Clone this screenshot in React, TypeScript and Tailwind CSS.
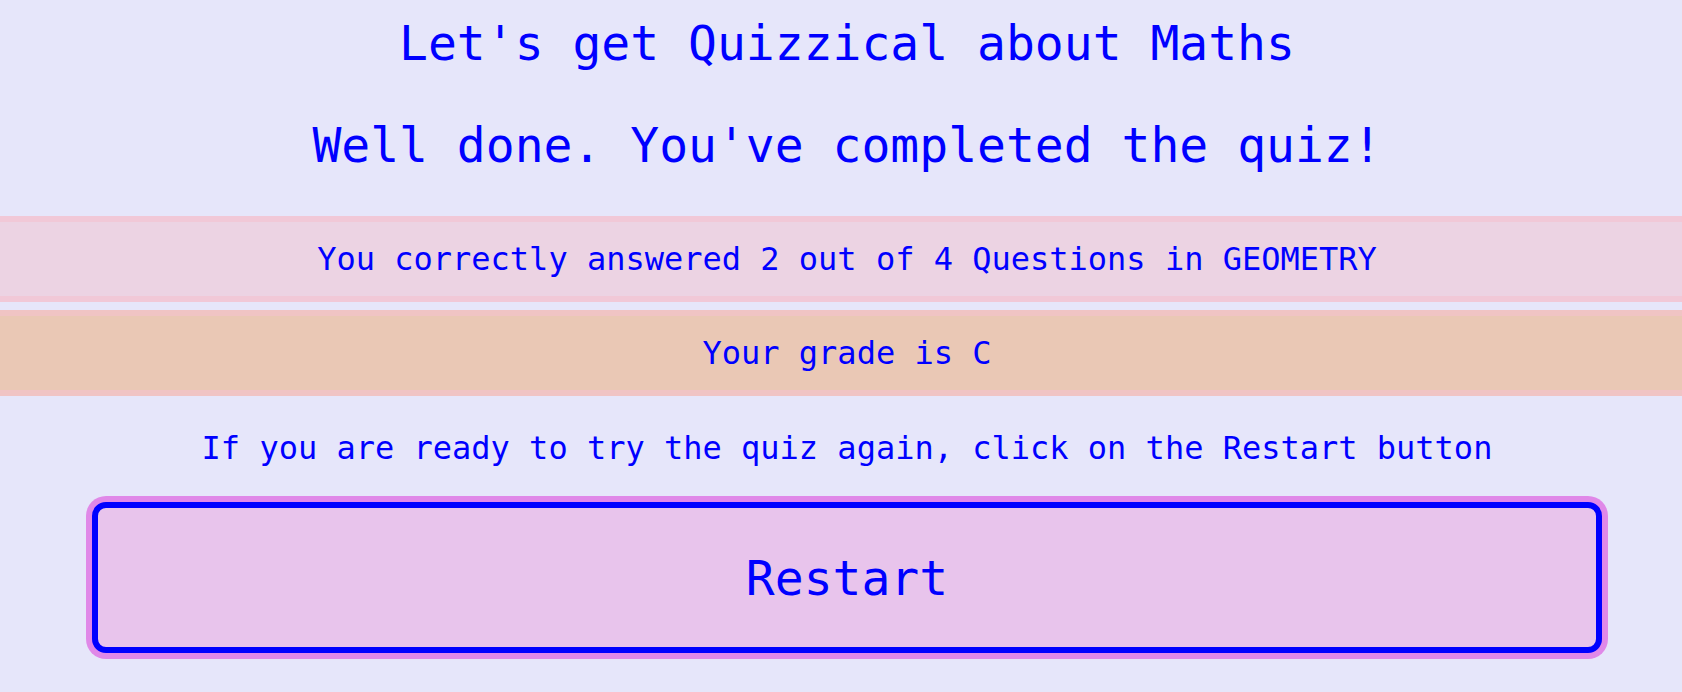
import React from 'react';

const mono = "font-['DejaVu_Sans_Mono',monospace]";

const ResultRow: React.FC<{ className: string; children: React.ReactNode }> = ({ className, children }) => (
  <div className={`flex h-[86px] items-center justify-center border-y-[6px] text-[32px] leading-[40px] ${className}`}>
    {children}
  </div>
);

export default function App() {
  return (
    <div className="h-[692px] w-full overflow-hidden bg-[#e6e6fa]">
      <main className={`w-[1694px] text-center text-[#0000ff] ${mono}`}>
        <h1 className="pt-[14px] text-[48px] leading-[58px] font-normal">Let's get Quizzical about Maths</h1>
        <h2 className="mt-[44px] text-[48px] leading-[58px] font-normal">Well done. You've completed the quiz!</h2>

        <div className="mt-[42px] flex flex-col gap-2">
          <ResultRow className="border-[#f1c8d7] bg-[#ecd3e3]">
            You correctly answered 2 out of 4 Questions in GEOMETRY
          </ResultRow>
          <ResultRow className="border-[#f0c4c4] bg-[#eac8b5]">Your grade is C</ResultRow>
        </div>

        <p className="mt-[32px] text-[32px] leading-[40px]">
          If you are ready to try the quiz again, click on the Restart button
        </p>

        <button
          type="button"
          className={`mx-auto mt-[34px] flex h-[151px] w-[1510px] items-center justify-center rounded-[14px] border-[6px] border-[#0000ff] bg-[#e8c4ec] text-[48px] text-[#0000ff] shadow-[0_0_0_6px_#e088e8] ${mono}`}
        >
          Restart
        </button>
      </main>
    </div>
  );
}
